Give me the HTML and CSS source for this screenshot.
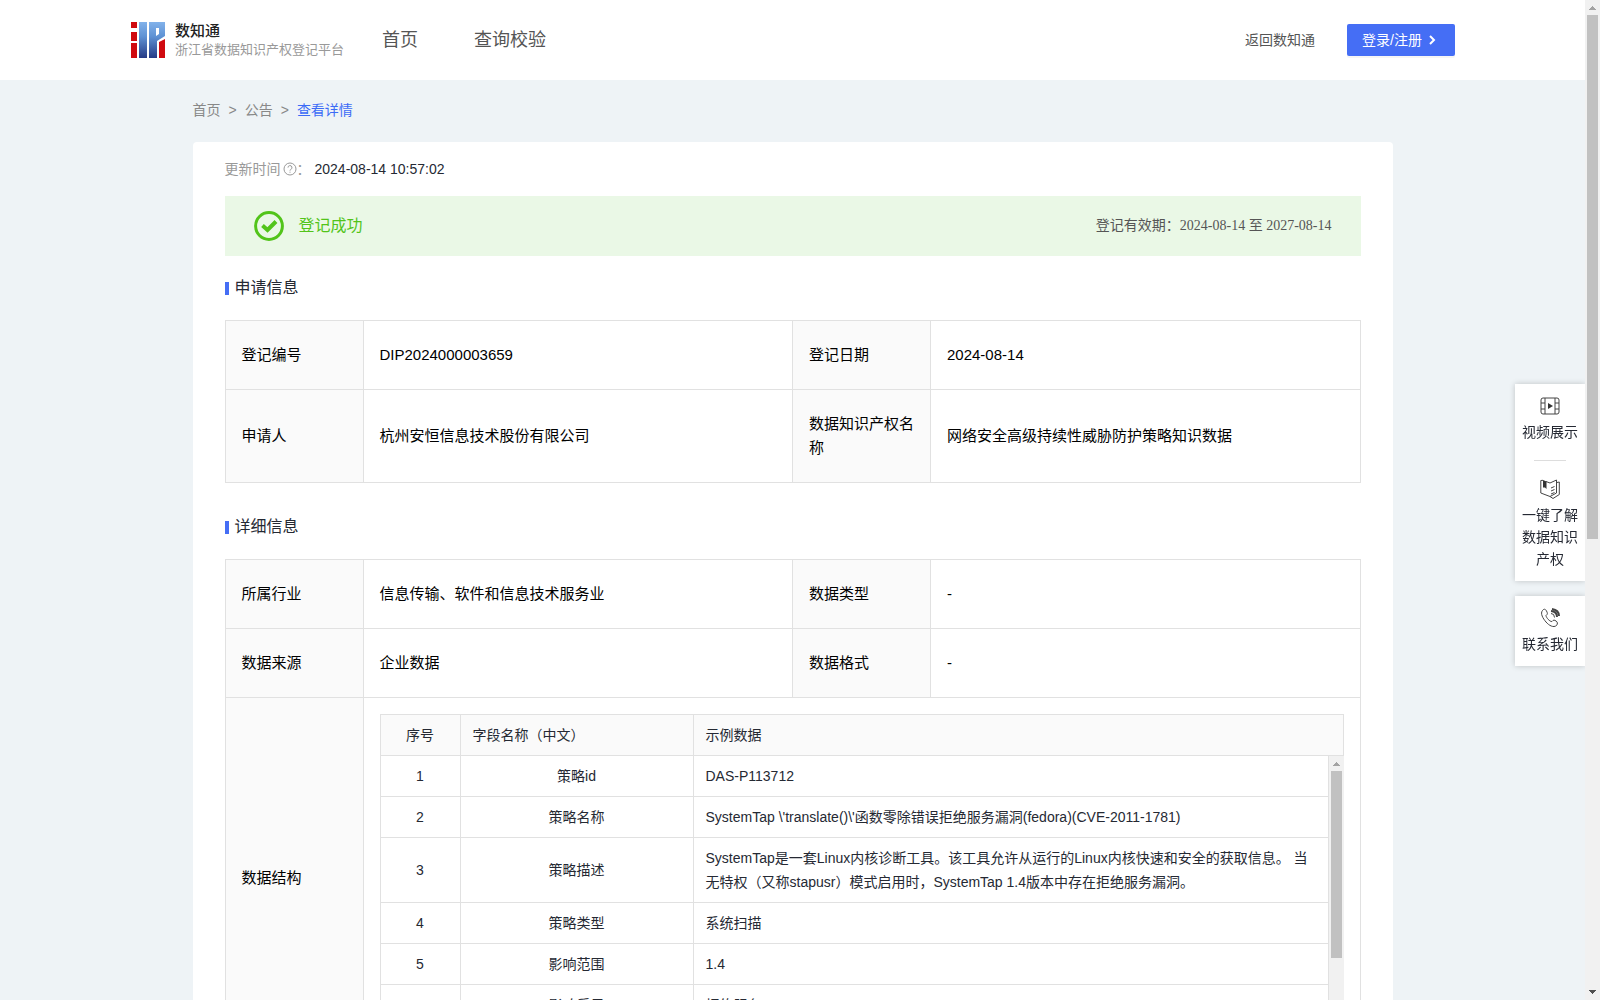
FILE: index.html
```html
<!DOCTYPE html>
<html lang="zh-CN">
<head>
<meta charset="utf-8">
<title>浙江省数据知识产权登记平台</title>
<link rel="stylesheet" href="styles.css">
</head>
<body>
<div class="page">
  <header class="header">
    <a class="brand" href="#">
      <svg class="brand-logo" viewBox="0 0 34 36" aria-hidden="true">
        <defs>
          <linearGradient id="blue" gradientUnits="userSpaceOnUse" x1="0" y1="0" x2="0" y2="36">
            <stop offset="0" stop-color="#82b2ea"/>
            <stop offset=".4" stop-color="#5f92d4"/>
            <stop offset="1" stop-color="#263b86"/>
          </linearGradient>
        </defs>
        <path fill="#d00a10" d="M0 0h6v6H0zM0 10h6v9H0zM0 21h6v15H0zM28 20l6-3v19h-6z"/>
        <path fill="url(#blue)" d="M8 0h8v36H8z"/>
        <path fill="url(#blue)" d="M18 0h16v14l-8 5v17h-8zM25 6v8l3-2V6z" fill-rule="evenodd"/>
      </svg>
      <span class="brand-text">
        <strong class="brand-name">数知通</strong>
        <span class="brand-sub">浙江省数据知识产权登记平台</span>
      </span>
    </a>
    <nav class="nav">
      <a href="#">首页</a>
      <a href="#">查询校验</a>
    </nav>
    <a class="back" href="#">返回数知通</a>
    <button class="login" type="button">登录/注册
      <svg class="chevron" viewBox="0 0 8 10" aria-hidden="true"><path d="M2 1l4 4-4 4"/></svg>
    </button>
  </header>

  <main class="content">
    <nav class="crumbs" aria-label="面包屑">
      <a href="#">首页</a><span>&gt;</span><a href="#">公告</a><span>&gt;</span><a class="current" href="#">查看详情</a>
    </nav>

    <section class="card">
      <p class="updated">
        <span>更新时间</span>
        <svg class="help" viewBox="0 0 14 14" aria-hidden="true"><circle cx="7" cy="7" r="6"/><path d="M5 5.600a2 2 0 1 1 2.800 1.800c-.6.3-.8.6-.8 1.200M7 9.700v1"/></svg>
        <span>：</span>
        <time>2024-08-14 10:57:02</time>
      </p>

      <div class="banner">
        <svg class="tick" viewBox="0 0 30 30" aria-hidden="true"><circle cx="15" cy="15" r="13.400"/><path class="tick-mark" d="M8.500 14.500l5 4.500 8.500-8.500"/></svg>
        <span class="banner-title">登记成功</span>
        <span class="validity">登记有效期：2024-08-14 至 2027-08-14</span>
      </div>

      <h2 class="section-title">申请信息</h2>
      <table class="info">
        <colgroup><col class="col-key"><col><col class="col-key"><col></colgroup>
        <tr><th>登记编号</th><td>DIP2024000003659</td><th>登记日期</th><td>2024-08-14</td></tr>
        <tr><th>申请人</th><td>杭州安恒信息技术股份有限公司</td><th>数据知识产权名称</th><td>网络安全高级持续性威胁防护策略知识数据</td></tr>
      </table>

      <h2 class="section-title">详细信息</h2>
      <table class="info">
        <colgroup><col class="col-key"><col><col class="col-key"><col></colgroup>
        <tr><th>所属行业</th><td>信息传输、软件和信息技术服务业</td><th>数据类型</th><td>-</td></tr>
        <tr><th>数据来源</th><td>企业数据</td><th>数据格式</th><td>-</td></tr>
        <tr>
          <th>数据结构</th>
          <td class="nested" colspan="3">
            <table class="fields">
              <colgroup><col class="col-no"><col class="col-name"><col></colgroup>
              <tr><th class="no">序号</th><th>字段名称（中文）</th><th>示例数据</th></tr>
            </table>
            <div class="fields-body">
              <div class="fields-scroll">
                <table class="fields">
                  <colgroup><col class="col-no"><col class="col-name"><col></colgroup>
                  <tr><td>1</td><td>策略id</td><td>DAS-P113712</td></tr>
                  <tr><td>2</td><td>策略名称</td><td>SystemTap \'translate()\'函数零除错误拒绝服务漏洞(fedora)(CVE-2011-1781)</td></tr>
                  <tr><td>3</td><td>策略描述</td><td>SystemTap是一套Linux内核诊断工具。该工具允许从运行的Linux内核快速和安全的获取信息。 当无特权（又称stapusr）模式启用时，SystemTap 1.4版本中存在拒绝服务漏洞。</td></tr>
                  <tr><td>4</td><td>策略类型</td><td>系统扫描</td></tr>
                  <tr><td>5</td><td>影响范围</td><td>1.4</td></tr>
                  <tr><td>6</td><td>影响后果</td><td>拒绝服务</td></tr>
                </table>
              </div>
              <div class="bar" aria-hidden="true">
                <svg class="arrow arrow-off" viewBox="0 0 15 15"><path d="M7 6h1v1h1v1h1v1h1v1H4V9h1V8h1V7h1z"/></svg>
                <div class="track"><div class="thumb" style="height: 73%"></div></div>
                <svg class="arrow" viewBox="0 0 15 15"><path d="M4 5h7v1h-1v1H9v1H8v1H7V8H6V7H5V6H4z"/></svg>
              </div>
            </div>
          </td>
        </tr>
      </table>
    </section>
  </main>
</div>

<div class="bar" aria-hidden="true">
  <svg class="arrow arrow-off" viewBox="0 0 15 15"><path d="M7 6h1v1h1v1h1v1h1v1H4V9h1V8h1V7h1z"/></svg>
  <div class="track"><div class="thumb" style="height: 54%"></div></div>
  <svg class="arrow" viewBox="0 0 15 15"><path d="M4 5h7v1h-1v1H9v1H8v1H7V8H6V7H5V6H4z"/></svg>
</div>

<aside class="dock">
  <div class="dock-group">
    <a class="dock-item" href="#">
      <svg viewBox="0 0 20 20" aria-hidden="true"><rect x="1" y="2" width="18" height="16" rx="2"/><path d="M5 2v16M15 2v16M1 7h4M1 13h4M15 7h4M15 13h4"/><path class="solid" d="M8 7l5 3-5 3z"/></svg>
      <span>视频展示</span>
    </a>
    <a class="dock-item dock-guide" href="#">
      <svg viewBox="0 0 20 20" aria-hidden="true"><path d="M6 2.500l4 1.500 6.500-3v13L10 17.500.8 14V1.500L3 1.300M17 3.500l2.300-.5v12.500L13 19.500l-3-2M11 9l3.500-1.500M11 12l3.500-1.500M11 15l3.500-1.500"/><path class="solid" d="M3 1l3.500 1.500V10L5 8.500 3 8.500z"/></svg>
      <span>一键了解数据知识产权</span>
    </a>
  </div>
  <div class="dock-group">
    <a class="dock-item" href="#">
      <svg viewBox="0 0 20 20" aria-hidden="true"><path d="M2.500 2.500C4 .5 5.500 1 6.500 3s1.500 3-.5 4.500C6 9.500 10 14 12 13.500c1.500-2 2.500-1.500 4-.5s2 2.500.5 4.500c-3 2.500-7.500 0-10.500-3.500S0 5.500 2.500 2.500zM11 5.500q3.500 0 3.500 4"/><path class="wave" d="M11 3q6 .5 6 6M12 1q7 1 7 7"/></svg>
      <span>联系我们</span>
    </a>
  </div>
</aside>
</body>
</html>
```
FILE: styles.css
```css
* { box-sizing: border-box; }

html, body { height: 100%; margin: 0; }

body {
  display: flex;
  overflow: hidden;
  font: 14px/24px "Liberation Sans", "Noto Sans CJK SC", sans-serif;
  color: #252933;
  background: #eef3f6;
}

a { color: inherit; text-decoration: none; }
svg { flex: none; fill: none; }

.page { flex: 1; min-width: 0; height: 100vh; overflow-y: scroll; scrollbar-width: none; }

/* Scroll bar: arrow, track, arrow */
.bar { display: flex; flex: none; flex-direction: column; width: 15px; background: #f1f1f1; }
.arrow { width: 15px; height: 15px; fill: #505050; }
.arrow-off { fill: #a3a3a3; }
.track { flex: 1; padding: 0 2px; }
.thumb { background: #c1c1c1; }

/* Header */
.header {
  display: flex;
  align-items: center;
  height: 80px;
  padding: 0 130px;
  background: #fff;
  color: #555;
}
.brand { display: flex; align-items: center; gap: 10px; margin-left: 1px; }
.brand-logo { width: 34px; height: 36px; }
.brand-text { display: flex; flex-direction: column; }
.brand-name { font-size: 15px; line-height: 20px; color: #222; font-weight: 500; }
.brand-sub { font-size: 13px; line-height: 18px; color: #999; }
.nav { display: flex; gap: 56px; margin-left: 38px; font-size: 18px; }
.back { margin-left: auto; }
.login {
  display: flex;
  align-items: center;
  gap: 6px;
  width: 108px;
  height: 32px;
  margin-left: 32px;
  padding: 0 15px;
  border: 0;
  border-radius: 2px;
  background: #456ef5;
  box-shadow: 0 2px 0 rgba(0, 0, 0, .04);
  color: #fff;
  font: inherit;
  white-space: nowrap;
}
.chevron { width: 8px; height: 10px; stroke: #fff; stroke-width: 2; }

/* Page body */
.content { max-width: 1200px; margin: 0 auto; padding: 18px 0 60px; }
.crumbs { display: flex; gap: 8px; color: #888; }
.crumbs .current { color: #3c6bf6; }

.card {
  margin-top: 20px;
  padding: 15px 32px 32px;
  border-radius: 4px;
  background: #fff;
}
.updated { display: flex; align-items: center; margin: 0 0 15px; color: #999; }
.updated time { margin-left: 4px; color: #252933; }
.help { width: 14px; height: 14px; margin-left: 2px; stroke: #999; }

.banner {
  display: flex;
  align-items: center;
  height: 60px;
  padding: 0 29px;
  background: #eaf8e6;
}
.tick { width: 30px; height: 30px; stroke: #52c41a; stroke-width: 3; }
.tick-mark { stroke-width: 4; }
.banner-title { margin-left: 15px; font-size: 16px; color: #52c41a; }
.validity { margin-left: auto; font-family: "Liberation Serif", "Noto Sans CJK SC", serif; color: #555; }

.section-title {
  display: flex;
  align-items: center;
  gap: 6px;
  margin: 20px 0;
  font-size: 16px;
  line-height: 24px;
  font-weight: 400;
}
.section-title::before { content: ""; width: 4px; height: 13px; background: #456ef5; }
.info + .section-title { margin-top: 32px; }

/* Key/value tables */
table { width: 100%; border-collapse: collapse; table-layout: fixed; }
th, td { border: 1px solid #e1e1e1; text-align: left; font-weight: 400; }
.info > tbody > tr > th, .info > tbody > tr > td { padding: 22px 16px; font-size: 15px; color: #000; }
th { background: #fafafa; }
.col-key { width: 138px; }
.info > tbody > tr > .nested { padding: 16px; }

/* Field list inside the structure row */
.fields th, .fields td { padding: 8px 12px; font-size: 14px; color: #252933; }
.fields td { text-align: center; }
.fields td:last-child { text-align: left; }
.fields .no { text-align: center; }
.col-no { width: 80px; }
.col-name { width: 233px; }
.fields-body { display: flex; height: 286px; }
.fields-scroll { flex: 1; min-width: 0; overflow-y: scroll; scrollbar-width: none; }
.fields-scroll tr:first-child td { border-top: 0; }

/* Floating shortcuts */
.dock {
  position: fixed;
  top: 384px;
  right: 15px;
  display: flex;
  flex-direction: column;
  gap: 15px;
  width: 70px;
  clip-path: inset(-10px 0 -10px -10px);
}
.dock-group { background: #fff; box-shadow: 0 0 6px rgba(0, 0, 0, .2); }
.dock-item {
  display: flex;
  flex-direction: column;
  align-items: center;
  gap: 5px;
  padding: 12px 6px 11px;
  line-height: 22px;
  text-align: center;
}
.dock-item svg { width: 20px; height: 20px; stroke: #444; }
.dock-item .solid { fill: #333; stroke: none; }
.dock-item .wave { stroke-width: 2; }
.dock-guide::before { content: ""; width: 32px; height: 1px; margin: -6px 0 13px; background: #ddd; }
```
